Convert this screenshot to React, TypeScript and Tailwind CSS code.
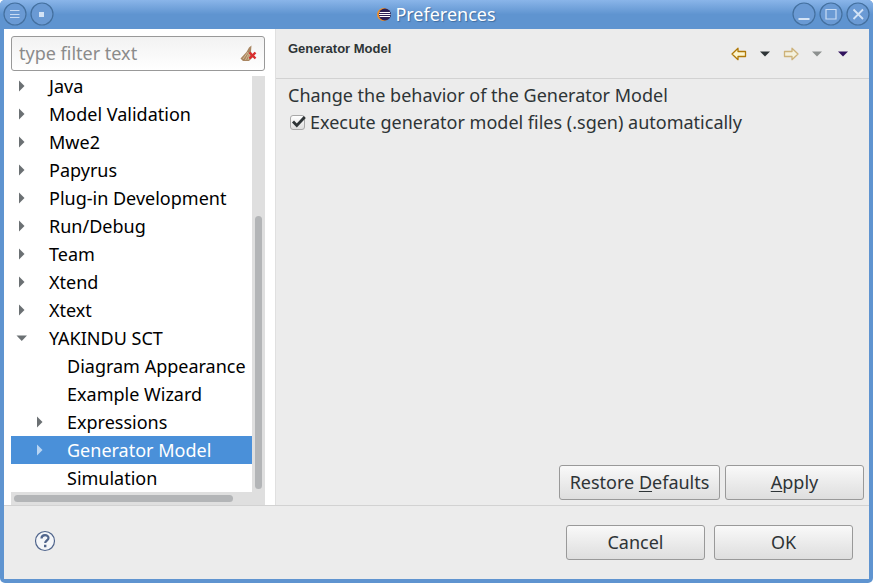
import { useState } from "react";
import type { ReactNode } from "react";

type Item = { name: string; level: number; state?: "open" | "closed" };

const items: Item[] = [
  { name: "Java", level: 0, state: "closed" },
  { name: "Model Validation", level: 0, state: "closed" },
  { name: "Mwe2", level: 0, state: "closed" },
  { name: "Papyrus", level: 0, state: "closed" },
  { name: "Plug-in Development", level: 0, state: "closed" },
  { name: "Run/Debug", level: 0, state: "closed" },
  { name: "Team", level: 0, state: "closed" },
  { name: "Xtend", level: 0, state: "closed" },
  { name: "Xtext", level: 0, state: "closed" },
  { name: "YAKINDU SCT", level: 0, state: "open" },
  { name: "Diagram Appearance", level: 1 },
  { name: "Example Wizard", level: 1 },
  { name: "Expressions", level: 1, state: "closed" },
  { name: "Generator Model", level: 1, state: "closed" },
  { name: "Simulation", level: 1 },
];

function TitleButton({ label, children }: { label: string; children: ReactNode }) {
  return (
    <button type="button" aria-label={label} className="size-6 shrink-0">
      <svg viewBox="0 0 24 24" className="size-6" fill="none">
        <circle cx="12" cy="12" r="11" fill="#6a9ad4" stroke="#44709f" strokeWidth="1.2" />
        {children}
      </svg>
    </button>
  );
}

function TitleBar() {
  return (
    <header className="flex h-[29px] shrink-0 items-center justify-between bg-linear-to-b from-[#8ab5e9] to-[#5f94d0] to-50% px-[3px] pb-px">
      <div className="flex w-[78px] gap-[3px]">
        <TitleButton label="Window menu">
          <path d="M7 8.500h9.500M7 12.500h9.500M7 15.500h9.500" stroke="#c9dcf3" strokeWidth="1" />
        </TitleButton>
        <TitleButton label="Pin window">
          <path d="M9 10h5v5h-5z" fill="#d3e3f6" />
        </TitleButton>
      </div>
      <div className="flex items-center gap-1 text-white">
        <svg viewBox="0 0 14 14" className="size-[14px]">
          <circle cx="6.500" cy="7.500" r="6.500" fill="#f0912a" />
          <circle cx="7.900" cy="7.500" r="6.100" fill="#2c2255" />
          <path d="M2.500 5.500h10.500M2 7.500h11.500M2.500 9.500h10.500" stroke="#fff" strokeWidth="1" />
        </svg>
        <h1 className="text-[18px] leading-6 text-shadow-[1px_1px_1px_#3f6c9f]">Preferences</h1>
      </div>
      <div className="flex w-[78px] gap-[3px]">
        <TitleButton label="Minimize">
          <path d="M6.500 17h11" stroke="#d3e3f6" strokeWidth="2" />
        </TitleButton>
        <TitleButton label="Maximize">
          <path d="M7 7.500h10v9.500h-10z" stroke="#c9dcf3" strokeWidth="1.2" />
        </TitleButton>
        <TitleButton label="Close">
          <path d="M7.500 7.500l9.500 9.500M17 7.500l-9.500 9.500" stroke="#d3e3f6" strokeWidth="1.8" />
        </TitleButton>
      </div>
    </header>
  );
}

function Twisty({ state, selected }: { state?: "open" | "closed"; selected: boolean }) {
  return (
    <svg viewBox="0 0 12 12" className={selected ? "size-3 fill-[#b9d5f3]" : "size-3 fill-[#6b7073]"}>
      {state === "closed" && <path d="M3 .5l5.500 5.500-5.500 5.500z" />}
      {state === "open" && <path d="M.5 3.500h10.500l-5.250 5.500z" />}
    </svg>
  );
}

function Sidebar() {
  const [selected, setSelected] = useState("Generator Model");
  return (
    <aside className="flex w-[271px] shrink-0 flex-col bg-white pt-[7px] pr-[10px] pl-[7px]">
      <div className="flex h-[35px] shrink-0 items-center rounded-[3px] border border-[#999] bg-linear-to-b from-[#f2f2f2] to-white pr-[7px] pb-px pl-[7px]">
        <input
          aria-label="Filter preferences"
          placeholder="type filter text"
          className="h-7 min-w-0 flex-1 bg-transparent text-[18px] leading-7 outline-none placeholder:text-[#8b8b8b]"
        />
        <button type="button" aria-label="Clear filter">
          <svg viewBox="0 0 17 17" className="size-[17px]">
            <path d="M9 2.500L11.500 .5l-.5 6 2 5.500-4 4H3L.5 13.500l6-6.500z" fill="#a98661" />
            <path d="M8 7l-5 7M9 8l-3.500 7M10 8l-2 7" stroke="#d9bf9a" strokeWidth=".9" />
            <path d="M9.500 7.500l6 6M15.500 7.500l-6 6" stroke="#d92e2e" strokeWidth="2.400" />
          </svg>
        </button>
      </div>
      <div className="mt-px flex min-h-0 flex-1">
        <div className="flex min-w-0 flex-1 flex-col">
          <ul role="tree" className="flex min-h-0 flex-1 flex-col justify-end overflow-hidden bg-white">
            {items.map((item) => {
              const active = item.name === selected;
              return (
                <li key={item.name} role="treeitem" aria-selected={active} className="h-7 shrink-0">
                  <button
                    type="button"
                    onClick={() => setSelected(item.name)}
                    className={`flex h-7 w-full items-center gap-[21px] text-left text-[18px] leading-5 whitespace-nowrap ${
                      item.level ? "pl-[23px]" : "pl-[5px]"
                    } ${active ? "bg-[#4a90d9] text-white" : "text-black"}`}
                  >
                    <Twisty state={item.state} selected={active} />
                    <span>{item.name}</span>
                  </button>
                </li>
              );
            })}
          </ul>
          <div className="h-[13px] shrink-0 bg-[#dfdfdf] p-[3px]">
            <div className="h-[7px] w-[93%] rounded-full bg-[#b3b5b7]" />
          </div>
        </div>
        <div className="mt-1 flex w-[13px] flex-col justify-end bg-[#dfdfdf] px-[3px] pb-4">
          <div className="h-[66%] w-[7px] rounded-full bg-[#b3b5b7]" />
        </div>
      </div>
    </aside>
  );
}

function Arrow({ className }: { className: string }) {
  return (
    <svg viewBox="0 0 16 14" className={`h-[14px] w-4 ${className}`}>
      <path d="M1 7l6-5.700v3.200h7.500v5H7v3.200z" fill="#fdf6cf" stroke="#b07908" strokeWidth="1.300" strokeLinejoin="round" />
    </svg>
  );
}

function Caret({ className }: { className: string }) {
  return (
    <svg viewBox="0 0 10 6" className={`h-[6px] w-[10px] ${className}`}>
      <path d="M0 .5h10l-5 5z" />
    </svg>
  );
}

function PushButton({ children, className }: { children: ReactNode; className: string }) {
  return (
    <button
      type="button"
      className={`h-[35px] rounded-[3px] border border-[#999] bg-linear-to-b from-[#f9f9f9] to-[#dedede] pb-[2px] text-[18px] leading-7 ${className}`}
    >
      {children}
    </button>
  );
}

function GeneratorPage() {
  const [auto, setAuto] = useState(true);
  return (
    <main className="flex min-w-0 flex-1 flex-col border-l border-[#e0e0e0]">
      <div className="flex h-[50px] shrink-0 items-center justify-between border-b border-[#d2d2d2] pr-[21px] pl-3">
        <h2 className="pb-[9px] font-['Liberation_Sans',sans-serif] text-[13px] leading-4 font-bold">Generator Model</h2>
        <nav className="flex items-center" aria-label="Page history">
          <button type="button" aria-label="Back"><Arrow className="" /></button>
          <button type="button" aria-label="Back history" className="ml-[13px]"><Caret className="fill-[#2e3436]" /></button>
          <button type="button" aria-label="Forward" className="ml-[13px]"><Arrow className="-scale-x-100 opacity-50" /></button>
          <button type="button" aria-label="Forward history" className="ml-[13px]"><Caret className="fill-[#8c908f]" /></button>
          <button type="button" aria-label="Page menu" className="ml-4"><Caret className="fill-[#31135e]" /></button>
        </nav>
      </div>
      <div className="min-h-0 flex-1 pt-[3px] pl-3">
        <p className="text-[18px] leading-[27px]">Change the behavior of the Generator Model</p>
        <label className="flex items-center text-[18px] leading-[27px]">
          <span className="relative mr-1 flex size-[18px] items-center">
            <input
              type="checkbox"
              checked={auto}
              onChange={(e) => setAuto(e.target.checked)}
              className="peer ml-[2px] size-[15px] appearance-none rounded-[3px] border border-[#a8a8a8] bg-linear-to-b from-white to-[#dedede]"
            />
            <svg viewBox="0 0 18 18" className="pointer-events-none absolute inset-0 hidden size-[18px] peer-checked:block">
              <path d="M5 7.500l3.800 4 8-8.500" stroke="#2e3436" strokeWidth="2.800" fill="none" />
            </svg>
          </span>
          Execute generator model files (.sgen) automatically
        </label>
      </div>
      <div className="flex justify-end gap-[5px] pr-[5px] pb-[5px]">
        <PushButton className="w-[161px]">Restore <u className="underline-offset-2">D</u>efaults</PushButton>
        <PushButton className="w-[139px]"><u className="underline-offset-2">A</u>pply</PushButton>
      </div>
    </main>
  );
}

export default function App() {
  return (
    <div className="flex h-screen flex-col overflow-hidden rounded-[5px] bg-[#5f94d0] font-['Noto_Sans',sans-serif] text-[#2e3436]">
      <TitleBar />
      <div className="mx-1 mb-1 flex min-h-0 flex-1 flex-col bg-[#ececec]">
        <div className="flex min-h-0 flex-1">
          <Sidebar />
          <GeneratorPage />
        </div>
        <footer className="flex h-[74px] shrink-0 items-center border-t border-[#d2d2d2] pr-4 pl-[30px]">
          <button type="button" aria-label="Help" className="pb-1">
            <svg viewBox="0 0 22 22" className="size-[22px]" fill="none" stroke="#50658c">
              <circle cx="11" cy="11" r="9.500" fill="#f4f6f9" strokeWidth="1.200" />
              <path d="M7.500 8.500c0-4.500 7-4.500 7-.5 0 2.500-3.300 2.500-3.300 5" strokeWidth="2.200" />
              <path d="M11.200 14.800v2.400" strokeWidth="2.400" />
            </svg>
          </button>
          <div className="ml-auto flex gap-[9px]">
            <PushButton className="w-[139px]">Cancel</PushButton>
            <PushButton className="w-[139px]">OK</PushButton>
          </div>
        </footer>
      </div>
    </div>
  );
}
